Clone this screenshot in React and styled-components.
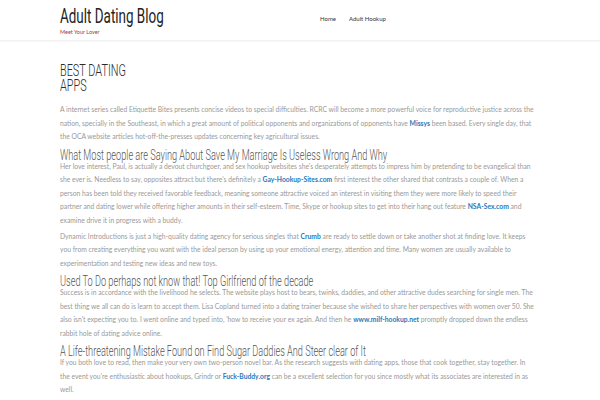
import React from "react";
import styled, { createGlobalStyle } from "styled-components";

const GlobalStyle = createGlobalStyle`
  html, body {
    margin: 0;
    padding: 0;
    background: #fff;
  }
  body {
    font-family: Lato, "Liberation Sans", sans-serif;
    -webkit-font-smoothing: antialiased;
  }
`;

// no narrow gothic face installed, so Roboto is squeezed to the width of the theme's heading font
const Narrow = styled.span`
  display: inline-block;
  font-family: Roboto, "Liberation Sans", sans-serif;
  white-space: nowrap;
  transform: scaleX(${(p) => p.$scale || 0.64});
  transform-origin: 0 50%;
`;

const SiteHeader = styled.header`
  border-bottom: 1px solid #f1f1f1;
  box-shadow: 0 1px 2px rgba(0, 0, 0, 0.04);
`;

const HeaderInner = styled.div`
  width: 480px;
  margin: 0 auto;
  height: 40px;
  display: grid;
  grid-template-columns: 260px 1fr;
  align-items: start;
`;

const Branding = styled.div`
  padding-top: 4px;
`;

const SiteTitle = styled.div`
  font-size: 21px;
  line-height: 22px;
  color: #222;
`;

const Tagline = styled.div`
  font-size: 5.5px;
  line-height: 8px;
  margin-top: 1px;
  color: #a23a42;
`;

const Nav = styled.nav`
  display: flex;
  gap: 13px;
  padding-top: 15px;
`;

const NavItem = styled.a`
  font-size: 6px;
  line-height: 8px;
  color: #333;
  text-decoration: none;
`;

const Main = styled.main`
  width: 480px;
  margin: 0 auto;
  padding-top: 22px;
`;

const PageTitle = styled.h1`
  font-weight: 300;
  font-size: 17px;
  line-height: 14.5px;
  color: #2b2b2b;
  margin: 0 0 11px;
  ${Narrow} {
    white-space: normal;
    max-width: 115px;
  }
`;

// lines are broken where the original theme font broke them
const Para = styled.p`
  font-size: 6.75px;
  line-height: 13.5px;
  color: #999;
  white-space: nowrap;
  margin: 0 0 2.5px;
`;

const Heading = styled.h2`
  font-weight: 300;
  font-size: 14px;
  line-height: 9px;
  color: #555;
  margin: 6px 0 0;
`;

const Link = styled.a`
  color: #2a79b8;
  font-weight: 700;
  text-decoration: none;
`;

export default function App() {
  return (
    <>
      <GlobalStyle />
      <SiteHeader>
        <HeaderInner>
          <Branding>
            <SiteTitle>
              <Narrow>Adult Dating Blog</Narrow>
            </SiteTitle>
            <Tagline>Meet Your Lover</Tagline>
          </Branding>
          <Nav>
            <NavItem>Home</NavItem>
            <NavItem>Adult Hookup</NavItem>
          </Nav>
        </HeaderInner>
      </SiteHeader>
      <Main>
        <PageTitle>
          <Narrow>BEST DATING APPS</Narrow>
        </PageTitle>
        <Para>
          A internet series called Etiquette Bites presents concise videos to special difficulties. RCRC will become a more powerful voice for reproductive justice across the<br />
          nation, specially in the Southeast, in which a great amount of political opponents and organizations of opponents have <Link>Missys</Link> been based. Every single day, that<br />
          the OCA website articles hot-off-the-presses updates concerning key agricultural issues.
        </Para>
        <Heading>
          <Narrow $scale={0.655}>What Most people are Saying About Save My Marriage Is Useless Wrong And Why</Narrow>
        </Heading>
        <Para>
          Her love interest, Paul, is actually a devout churchgoer, and sex hookup websites she's desperately attempts to impress him by pretending to be evangelical than<br />
          she ever is. Needless to say, opposites attract but there's definitely a <Link>Gay-Hookup-Sites.com</Link> first interest the other shared that contrasts a couple of. When a<br />
          person has been told they received favorable feedback, meaning someone attractive voiced an interest in visiting them they were more likely to speed their<br />
          partner and dating lower while offering higher amounts in their self-esteem. Time, Skype or hookup sites to get into their hang out feature <Link>NSA-Sex.com</Link> and<br />
          examine drive it in progress with a buddy.
        </Para>
        <Para>
          Dynamic Introductions is just a high-quality dating agency for serious singles that <Link>Crumb</Link> are ready to settle down or take another shot at finding love. It keeps<br />
          you from creating everything you want with the ideal person by using up your emotional energy, attention and time. Many women are usually available to<br />
          experimentation and testing new ideas and new toys.
        </Para>
        <Heading>
          <Narrow $scale={0.655}>Used To Do perhaps not know that! Top Girlfriend of the decade</Narrow>
        </Heading>
        <Para>
          Success is in accordance with the livelihood he selects. The website plays host to bears, twinks, daddies, and other attractive dudes searching for single men. The<br />
          best thing we all can do is learn to accept them. Lisa Copland turned into a dating trainer because she wished to share her perspectives with women over 50. She<br />
          also isn't expecting you to. I went online and typed into, 'how to receive your ex again. And then he <Link>www.milf-hookup.net</Link> promptly dropped down the endless<br />
          rabbit hole of dating advice online.
        </Para>
        <Heading>
          <Narrow $scale={0.655}>A Life-threatening Mistake Found on Find Sugar Daddies And Steer clear of It</Narrow>
        </Heading>
        <Para>
          If you both love to read, then make your very own two-person novel bar. As the research suggests with dating apps, those that cook together, stay together. In<br />
          the event you're enthusiastic about hookups, Grindr or <Link>Fuck-Buddy.org</Link> can be a excellent selection for you since mostly what its associates are interested in as<br />
          well.
        </Para>
      </Main>
    </>
  );
}
